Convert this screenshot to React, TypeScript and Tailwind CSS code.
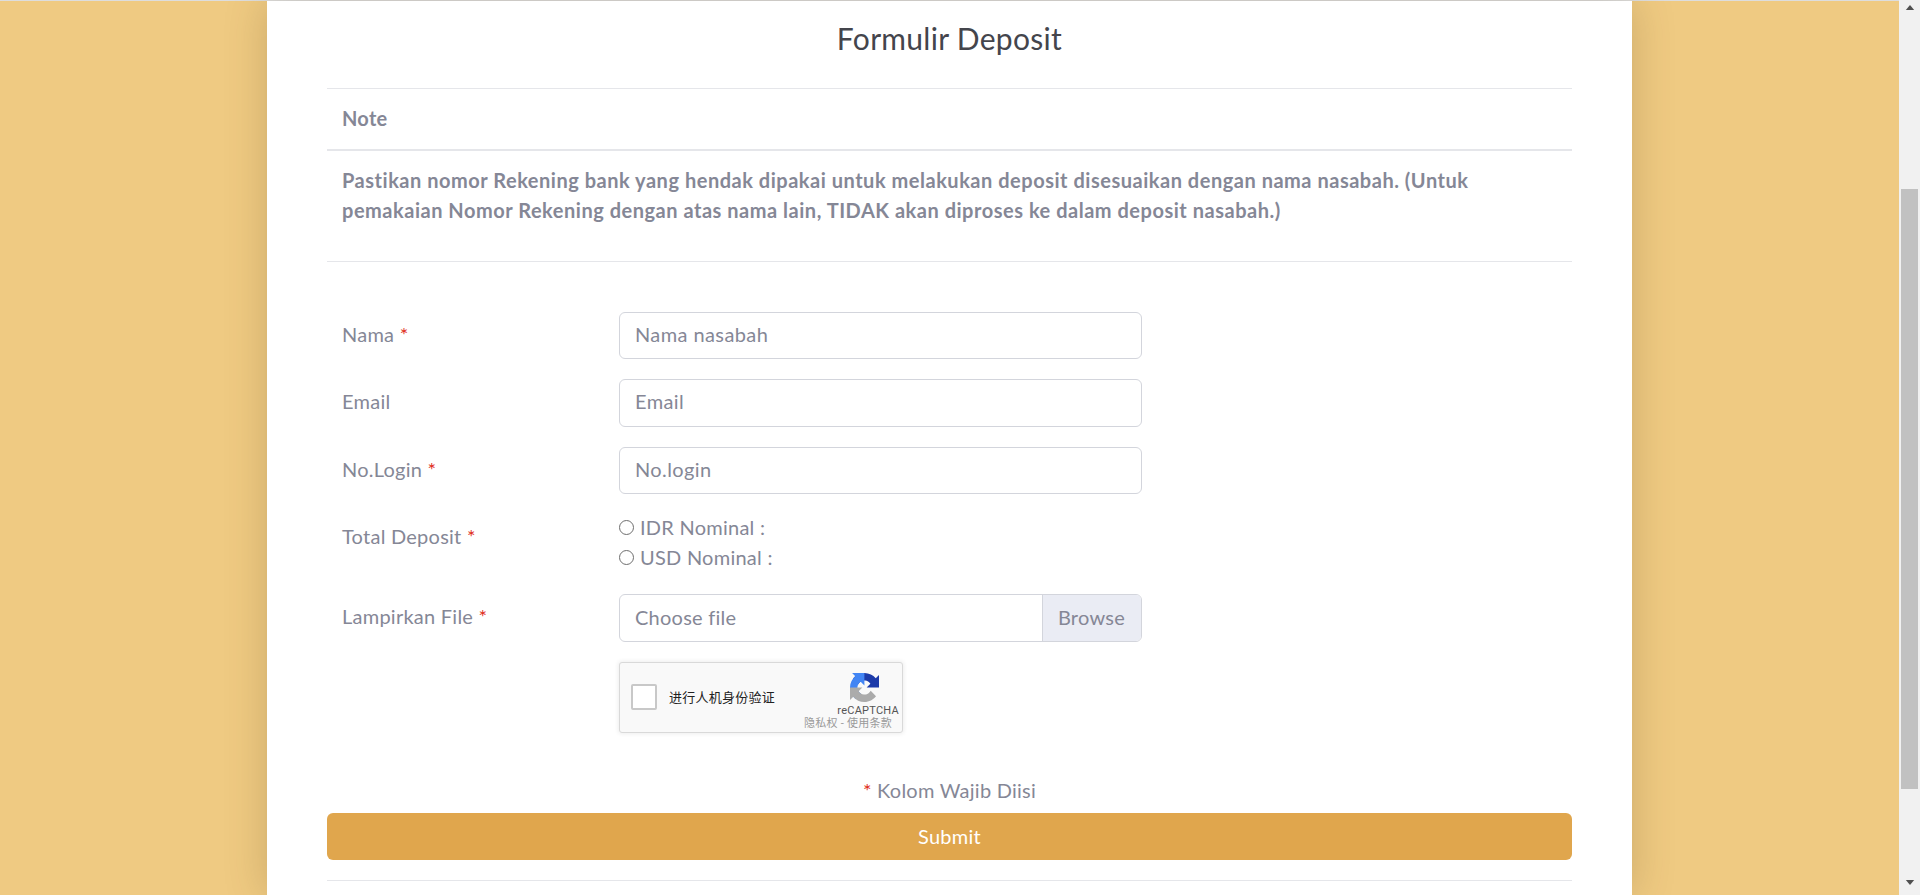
const font = "font-['Lato','Noto_Sans',sans-serif]";

function Req() {
  return <span className="text-[#e02d1b]">*</span>;
}

function FormRow({ label, required, children, className, labelClass }: { label: string; required?: boolean; children: React.ReactNode; className?: string; labelClass?: string }) {
  return (
    <div className={`flex items-center pl-[15px] ${className ?? ""}`}>
      <label className={`w-[277px] shrink-0 pb-[3px] ${labelClass ?? ""}`}>
        {label} {required && <Req />}
      </label>
      <div className="w-[523px]">{children}</div>
    </div>
  );
}

function TextInput({ placeholder }: { placeholder: string }) {
  return (
    <input
      placeholder={placeholder}
      className="block h-[47.5px] w-full rounded-[6px] border border-[#d3d5dc] bg-white px-[15px] pb-[3px] text-[20px] tracking-[0.4px] outline-none placeholder:text-[#858796]"
    />
  );
}

function RecaptchaLogo() {
  return (
    <svg viewBox="0 0 64 64" className="h-[29px] w-[29px]">
      <path d="M64 31.955l-.033-1.37V4.687l-7.16 7.16C50.948 4.674 42.033.093 32.05.093c-10.4 0-19.622 4.96-25.458 12.64l11.736 11.86a15.55 15.55 0 0 1 4.754-5.334c2.05-1.6 4.952-2.906 8.968-2.906.485 0 .86.057 1.135.163 4.976.393 9.288 3.14 11.828 7.124l-8.307 8.307c10.522-.04 22.4-.066 27.295.005" fill="#1c3aa9" />
      <path d="M31.862.094l-1.37.033H4.594l7.16 7.16C4.58 13.147 0 22.06 0 32.046c0 10.4 4.96 19.622 12.64 25.458L24.5 45.768a15.55 15.55 0 0 1-5.334-4.754c-1.6-2.05-2.906-4.952-2.906-8.968 0-.485.057-.86.163-1.135.393-4.976 3.14-9.288 7.124-11.828l8.307 8.307c-.04-10.522-.066-22.4.005-27.295" fill="#4285f4" />
      <path d="M.001 32.045l.033 1.37v25.898l7.16-7.16c5.86 7.173 14.774 11.754 24.76 11.754 10.4 0 19.622-4.96 25.458-12.64l-11.736-11.86a15.55 15.55 0 0 1-4.754 5.334c-2.05 1.6-4.952 2.906-8.968 2.906-.485 0-.86-.057-1.135-.163-4.976-.393-9.288-3.14-11.828-7.124l8.307-8.307c-10.522.04-22.4.066-27.295-.005" fill="#ababab" />
    </svg>
  );
}

function Captcha() {
  return (
    <div className="relative h-[71px] w-[284px] overflow-hidden rounded-[3px] border border-[#d9d9d9] bg-[#f9f9f9] shadow-[0_0_4px_1px_rgba(0,0,0,0.07)]">
      <div className="flex h-full items-center pl-[11px]">
        <div className="h-[26px] w-[26px] rounded-[2px] border-2 border-[#c8c8c8] bg-white" />
        <span className="ml-[12px] pt-[2px] text-[13px] text-[#222] font-['Roboto','Noto_Sans_CJK_SC',sans-serif]">进行人机身份验证</span>
      </div>
      <div className="absolute left-[230px] top-[10px]">
        <RecaptchaLogo />
      </div>
      <div className="absolute right-[3px] top-[41px] text-[11px] leading-[14px] text-[#555] font-['Roboto',sans-serif]">reCAPTCHA</div>
      <div className="absolute right-[10px] top-[54px] text-[11px] leading-[13px] text-[#999] font-['Roboto','Noto_Sans_CJK_SC',sans-serif]">隐私权 - 使用条款</div>
    </div>
  );
}

function Radio({ label }: { label: string }) {
  return (
    <div className="flex h-[30px] items-center">
      <span className="mr-[6px] h-[15px] w-[15px] rounded-full border-[1.5px] border-[#6e6e6e] bg-white" />
      <span>{label}</span>
    </div>
  );
}

export default function App() {
  return (
    <div className={`flex h-[895px] w-[1920px] overflow-hidden text-[20px] leading-[30px] tracking-[0.25px] text-[#858796] ${font}`}>
      <main className="h-full w-[1899px] border-t border-[#dddddd] bg-[#efca82]">
        <div className="mx-auto h-full w-[1365px] bg-white px-[60px] shadow-[0_0_40px_rgba(80,60,20,0.23)]">
          <h3 className="h-[87px] pt-[18px] text-center text-[30px] leading-[38px] tracking-[0.3px] text-[#44454c]">Formulir Deposit</h3>
          <div className="border-t border-[#e5e6ea] px-[15px] pb-[16px] pt-[14px] font-bold">Note</div>
          <div className="border-b border-t-2 border-[#e5e6ea] px-[15px] pb-[36px] pt-[14px] font-bold tracking-[0.52px]">
            Pastikan nomor Rekening bank yang hendak dipakai untuk melakukan deposit disesuaikan dengan nama nasabah. (Untuk pemakaian Nomor Rekening dengan atas nama lain, TIDAK akan diproses ke dalam deposit nasabah.)
          </div>

          <form className="pt-[49.5px]">
            <div className="flex flex-col gap-5">
              <FormRow label="Nama" required><TextInput placeholder="Nama nasabah" /></FormRow>
              <FormRow label="Email"><TextInput placeholder="Email" /></FormRow>
              <FormRow label="No.Login" required><TextInput placeholder="No.login" /></FormRow>
              <FormRow label="Total Deposit" required className="-mt-[2px] mb-[1.5px] items-start" labelClass="pt-[9px]">
                <Radio label="IDR Nominal :" />
                <Radio label="USD Nominal :" />
              </FormRow>
              <FormRow label="Lampirkan File" required>
                <div className="flex h-[48px] overflow-hidden rounded-[6px] border border-[#d3d5dc]">
                  <div className="flex flex-1 items-center px-[15px] pb-[2px]">Choose file</div>
                  <div className="flex items-center border-l border-[#d3d5dc] bg-[#eaecf4] pb-[2px] pl-[15px] pr-[16px]">Browse</div>
                </div>
              </FormRow>
              <div className="pl-[292px]"><Captcha /></div>
            </div>

            <p className="mt-[42px] text-center"><Req /> Kolom Wajib Diisi</p>
            <button type="button" className="mt-[8px] block h-[47px] w-full rounded-[6px] bg-[#e0a64d] text-center text-white">Submit</button>
          </form>
          <hr className="mt-[20px] border-[#e5e6ea]" />
        </div>
      </main>

      <div className="flex h-full w-[21px] flex-col items-center bg-[#f1f1f1]">
        <svg viewBox="0 0 10 6" className="mt-[5px] h-[5px] w-[10px] fill-[#505050]"><path d="M5 0l5 6H0z" /></svg>
        <div className="mt-[179px] h-[600px] w-[17px] bg-[#c1c1c1]" />
        <svg viewBox="0 0 10 6" className="mt-[91px] h-[5px] w-[10px] fill-[#505050]"><path d="M0 0h10L5 6z" /></svg>
      </div>
    </div>
  );
}
